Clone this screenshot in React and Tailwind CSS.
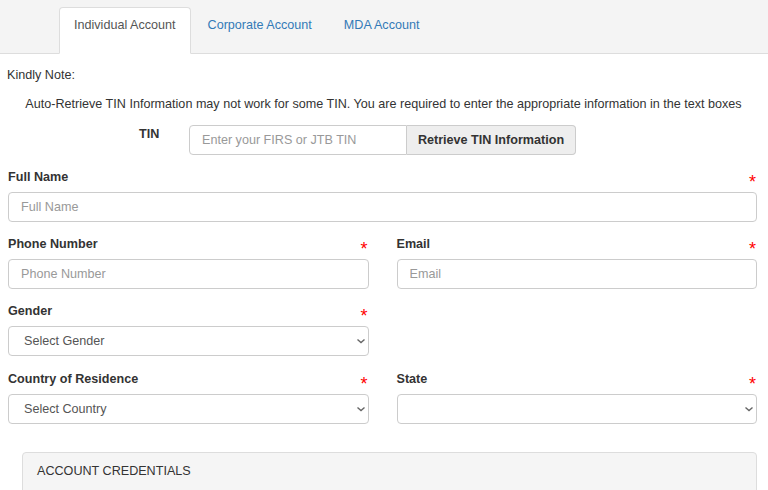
import { useState } from "react";

const tabs = ["Individual Account", "Corporate Account", "MDA Account"];

function Chevron() {
  return (
    <svg
      width="10"
      height="10"
      viewBox="0 0 10 10"
      className="pointer-events-none absolute right-[3px] top-[10px]"
    >
      <path d="M1.5 3.5 L5 6.5 L8.5 3.5" fill="none" stroke="#666" strokeWidth="1.4" />
    </svg>
  );
}

function Field({ label, required, placeholder, select, className = "" }) {
  return (
    <div className={`flex flex-col ${className}`}>
      <div className="flex justify-between items-start h-[18px] mb-[6px]">
        <label className="font-bold text-[12.6px] leading-[18px] text-[#333]">{label}</label>
        {required && (
          <span className="text-[#ff0000] text-[18px] leading-none mt-[5px] mr-[1px]">*</span>
        )}
      </div>
      {select !== undefined ? (
        <div className="relative">
          <select className="appearance-none w-full h-[30px] border border-[#ccc] rounded-[4px] bg-white pl-[15px] text-[12.6px] text-[#555] outline-none">
            <option>{select}</option>
          </select>
          <Chevron />
        </div>
      ) : (
        <input
          type="text"
          placeholder={placeholder}
          className="w-full h-[30px] border border-[#ccc] rounded-[4px] px-[12px] text-[12.6px] text-[#555] placeholder:text-[#999] outline-none"
        />
      )}
    </div>
  );
}

export default function App() {
  const [active, setActive] = useState(0);

  return (
    <div
      className="w-[768px] h-[490px] overflow-hidden bg-white text-[#333]"
      style={{ fontFamily: '"Liberation Sans", Arial, sans-serif' }}
    >
      {/* Tabs */}
      <div className="h-[54px] bg-[#f4f4f4] border-b border-[#ddd] flex items-end pl-[59px]">
        {tabs.map((t, i) => (
          <button
            key={t}
            onClick={() => setActive(i)}
            className={`h-[47px] -mb-px mr-[2px] px-[14px] pt-[8px] flex items-start text-[12.6px] leading-[18px] rounded-t-[4px] border ${
              i === active
                ? "bg-white border-[#ddd] border-b-white text-[#555]"
                : "border-transparent text-[#337ab7]"
            }`}
          >
            {t}
          </button>
        ))}
      </div>

      <div className="pl-[8px] pr-[11px]">
        <p className="text-[12.6px] leading-[18px] mt-[12px] -ml-[1px]">Kindly Note:</p>
        <p className="text-[12.6px] leading-[18px] mt-[11px] text-center pl-[2px]">
          Auto-Retrieve TIN Information may not work for some TIN. You are required to enter the appropriate information in the text boxes
        </p>

        {/* TIN row */}
        <div className="flex items-start mt-[12px] pl-[131px]">
          <span className="font-bold text-[12.6px] leading-[18px] w-[50px]">TIN</span>
          <input
            type="text"
            placeholder="Enter your FIRS or JTB TIN"
            className="w-[218px] h-[30px] border border-[#ccc] rounded-l-[4px] px-[12px] text-[12.6px] placeholder:text-[#999] outline-none"
          />
          <button className="w-[169px] h-[30px] border border-l-0 border-[#ccc] rounded-r-[4px] bg-[#eee] font-bold text-[12.6px] text-[#333]">
            Retrieve TIN Information
          </button>
        </div>

        <Field className="mt-[13px]" label="Full Name" required placeholder="Full Name" />

        <div className="grid grid-cols-2 gap-x-[28px]">
          <Field className="mt-[13px]" label="Phone Number" required placeholder="Phone Number" />
          <Field className="mt-[13px]" label="Email" required placeholder="Email" />
          <Field className="mt-[13px]" label="Gender" required select="Select Gender" />
          <div />
          <Field className="mt-[14px]" label="Country of Residence" required select="Select Country" />
          <Field className="mt-[14px]" label="State" required select="" />
        </div>

        {/* Account credentials panel */}
        <div className="ml-[14px] mt-[28px] h-[50px] bg-[#f5f5f5] border border-[#ddd] rounded-t-[4px] px-[14px] pt-[5px]">
          <span className="text-[12.6px] leading-[18px] text-[#333]">ACCOUNT CREDENTIALS</span>
        </div>
      </div>
    </div>
  );
}
